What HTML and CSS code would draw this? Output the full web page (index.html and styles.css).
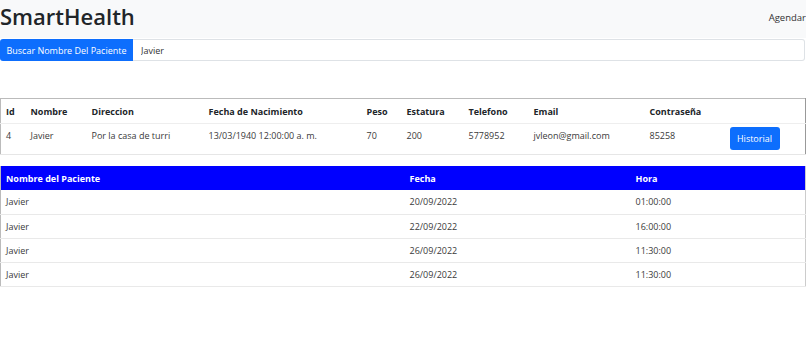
FILE: index.html
```html
<!DOCTYPE html>
<html lang="es">
<head>
  <meta charset="UTF-8" />
  <meta name="viewport" content="width=device-width, initial-scale=1.0"/>
  <title>SmartHealth</title>
  <link rel="stylesheet" href="styles.css">
</head>
<body>

  <nav class="navbar">
    <h1 class="brand">SmartHealth</h1>
    <a class="nav-link" href="#">Agendar</a>
  </nav>

  <form class="search">
    <button type="button" class="search-btn">Buscar Nombre Del Paciente</button>
    <input type="text" class="search-input" value="Javier" />
  </form>

  <table class="patients">
    <colgroup>
      <col style="width:25px"><col style="width:61px"><col style="width:117px"><col style="width:158px"><col style="width:40px">
      <col style="width:62px"><col style="width:65px"><col style="width:116px"><col style="width:80px"><col>
    </colgroup>
    <thead>
      <tr>
        <th>Id</th><th>Nombre</th><th>Direccion</th><th>Fecha de Nacimiento</th><th>Peso</th>
        <th>Estatura</th><th>Telefono</th><th>Email</th><th>Contraseña</th><th></th>
      </tr>
    </thead>
    <tbody>
      <tr>
        <td>4</td><td>Javier</td><td>Por la casa de turri</td><td>13/03/1940 12:00:00 a. m.</td><td>70</td>
        <td>200</td><td>5778952</td><td>jvleon@gmail.com</td><td>85258</td>
        <td><button type="button" class="btn-historial">Historial</button></td>
      </tr>
    </tbody>
  </table>

  <table class="citas">
    <colgroup>
      <col style="width:404px"><col style="width:226px"><col>
    </colgroup>
    <thead>
      <tr><th>Nombre del Paciente</th><th>Fecha</th><th>Hora</th></tr>
    </thead>
    <tbody>
      <tr><td>Javier</td><td>20/09/2022</td><td>01:00:00</td></tr>
      <tr><td>Javier</td><td>22/09/2022</td><td>16:00:00</td></tr>
      <tr><td>Javier</td><td>26/09/2022</td><td>11:30:00</td></tr>
      <tr><td>Javier</td><td>26/09/2022</td><td>11:30:00</td></tr>
    </tbody>
  </table>

</body>
</html>
```

FILE: styles.css
```css
body {
  margin: 0;
  font-family: "Open Sans", Arial, sans-serif;
  font-size: 9px;
  color: #3a3a3a;
  background: #fff;
}
.navbar {
  display: flex;
  justify-content: space-between;
  align-items: center;
  height: 38px;
  background: #f8f9fa;
}
.brand {
  margin: 0;
  font-size: 22px;
  font-weight: 600;
  color: #212529;
  line-height: 1;
  padding-bottom: 6px;
}
.nav-link {
  font-size: 9.5px;
  color: #333;
  text-decoration: none;
  margin-right: 0;
  padding-bottom: 4px;
}
.search {
  display: flex;
  margin: 1px 1px 0 0;
  height: 22px;
}
.search-btn {
  width: 133px;
  border: none;
  border-radius: 3px 0 0 3px;
  background: #0d6efd;
  color: #fff;
  font-family: inherit;
  font-size: 9px;
  padding: 0;
}
.search-input {
  flex: 1;
  border: 1px solid #dee2e6;
  border-left: none;
  border-radius: 0 3px 3px 0;
  padding: 0 8px;
  font-family: inherit;
  font-size: 9px;
  color: #333;
  outline: none;
}
table {
  width: 806px;
  border-collapse: collapse;
  table-layout: fixed;
}
.patients {
  margin-top: 37px;
  border: 1px solid #bbb;
  border-right-color: #999;
  border-bottom-color: #e6e6e6;
}
.patients th,
.patients td {
  text-align: left;
  padding: 0 5px;
}
.patients thead tr {
  height: 25px;
}
.patients tbody tr {
  height: 31px;
}
.patients th {
  font-weight: 700;
  color: #212529;
  border-bottom: 1px solid #eee;
}
.patients td {
  vertical-align: top;
  padding-top: 5px;
}
.btn-historial {
  margin-top: -2px;
  width: 50px;
  height: 23px;
  border: none;
  border-radius: 3px;
  background: #0d6efd;
  color: #fff;
  font-family: inherit;
  font-size: 9px;
  padding: 0;
}
.citas {
  margin-top: 11px;
  border-left: 1px solid #bbb;
  border-right: 1px solid #ccc;
}
.citas th,
.citas td {
  text-align: left;
  padding: 0 5px;
}
.citas tr {
  height: 24px;
}
.citas th {
  background: #0000ff;
  color: #fff;
  font-weight: 700;
}
.citas td {
  border-bottom: 1px solid #e9e9e9;
}
```
